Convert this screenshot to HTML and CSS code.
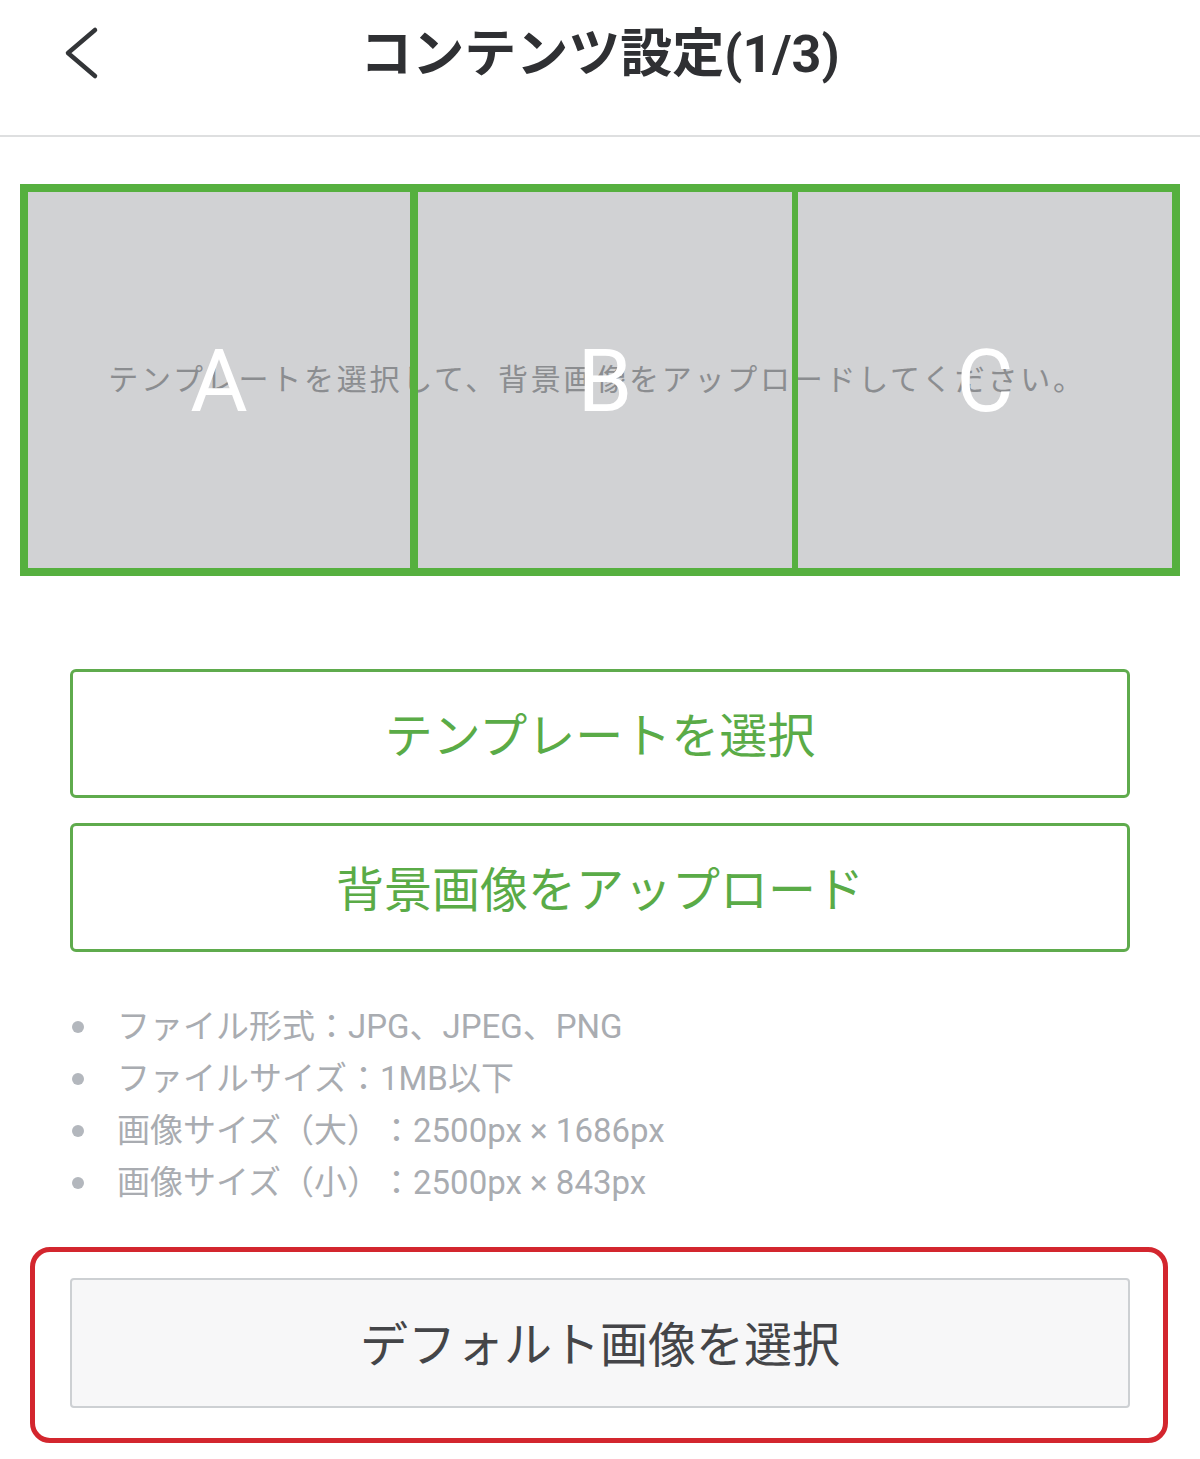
FILE: index.html
```html
<!DOCTYPE html>
<html>
<head>
  <meta charset="utf-8">
  <title>コンテンツ設定</title>
  <link rel="stylesheet" href="styles.css">
</head>
<body>

<div class="header">
  <div class="backBtn">
    <svg width="40" height="56" viewBox="0 0 40 56">
      <path d="M33 5 L6 28 L33 51" fill="none" stroke="#333538" stroke-width="4.5" stroke-linecap="round" stroke-linejoin="round"/>
    </svg>
  </div>
  <div class="headerTitle">コンテンツ設定(1/3)</div>
  <div></div>
</div>

<div class="preview">
  <p class="previewHint">テンプレートを選択して、背景画像をアップロードしてください。</p>
  <div class="previewGrid">
    <div class="cell"><span class="cellLetter">A</span></div>
    <div class="cell cellB"><span class="cellLetter">B</span></div>
    <div class="cell cellC"><span class="cellLetter">C</span></div>
  </div>
</div>

<div class="actions">
  <div class="greenBtn">テンプレートを選択</div>
  <div class="greenBtn">背景画像をアップロード</div>
</div>

<ul class="notes">
  <li>ファイル形式：JPG、JPEG、PNG</li>
  <li>ファイルサイズ：1MB以下</li>
  <li>画像サイズ（大）：2500px × 1686px</li>
  <li>画像サイズ（小）：2500px × 843px</li>
</ul>

<div class="highlight">
  <div class="grayBtn">デフォルト画像を選択</div>
</div>

</body>
</html>
```

FILE: styles.css
```css
body {
  margin: 0;
  background: #fff;
  font-family: Roboto, "Noto Sans CJK JP", sans-serif;
  text-spacing-trim: space-all;
}

.header {
  height: 137px;
  display: grid;
  grid-template-columns: 1fr auto 1fr;
  align-items: start;
  padding-top: 25px;
  box-sizing: border-box;
  border-bottom: 2px solid #dedfe0;
}

.backBtn {
  padding-left: 62px;
  height: 56px;
}

.headerTitle {
  font-size: 52px;
  font-weight: 700;
  line-height: 60px;
  color: #2f3033;
}

.preview {
  position: relative;
  margin: 47px 20px 0;
  height: 392px;
  box-sizing: border-box;
  border: 8px solid #56b03f;
  background: #d1d2d4;
}

.previewHint {
  position: absolute;
  left: 0;
  right: 0;
  top: 50%;
  margin: 0;
  transform: translateY(-50%);
  text-align: center;
  font-size: 30px;
  letter-spacing: 2.75px;
  line-height: 40px;
  color: #8b8d90;
  padding-right: 6px;
}

.previewGrid {
  position: relative;
  z-index: 1;
  height: 100%;
  display: grid;
  grid-template-columns: 382fr 382fr 380fr;
}

.cell {
  display: flex;
  align-items: center;
  justify-content: center;
}

.cellB {
  border-left: 8px solid #56b03f;
}

.cellC {
  border-left: 6px solid #56b03f;
}

.cellLetter {
  font-size: 88px;
  font-weight: 400;
  line-height: 1;
  color: #fff;
  margin-top: 2px;
}

.actions {
  margin: 93px 70px 0;
  display: flex;
  flex-direction: column;
  gap: 25px;
}

.greenBtn {
  height: 129px;
  box-sizing: border-box;
  border: 3px solid #5fab4d;
  border-radius: 6px;
  display: flex;
  align-items: center;
  justify-content: center;
  font-size: 48px;
  color: #5aab47;
  padding-bottom: 4px;
}

.notes {
  list-style: none;
  margin: 49px 0 0;
  padding: 0 0 0 72px;
  font-size: 33px;
  line-height: 52px;
  color: #a9acb1;
}

.notes li {
  display: flex;
  align-items: center;
}

.notes li::before {
  content: "";
  width: 12px;
  height: 12px;
  border-radius: 50%;
  background: #b3b7bd;
  margin-right: 33px;
  flex: none;
}

.highlight {
  margin: 38px 32px 0 30px;
  border: 5px solid #d3262e;
  border-radius: 20px;
  padding: 26px 33px 30px 35px;
}

.grayBtn {
  height: 130px;
  box-sizing: border-box;
  background: #f7f7f8;
  border: 2px solid #cdd0d3;
  border-radius: 4px;
  display: flex;
  align-items: center;
  justify-content: center;
  font-size: 48px;
  color: #444548;
  padding-bottom: 4px;
}
```
